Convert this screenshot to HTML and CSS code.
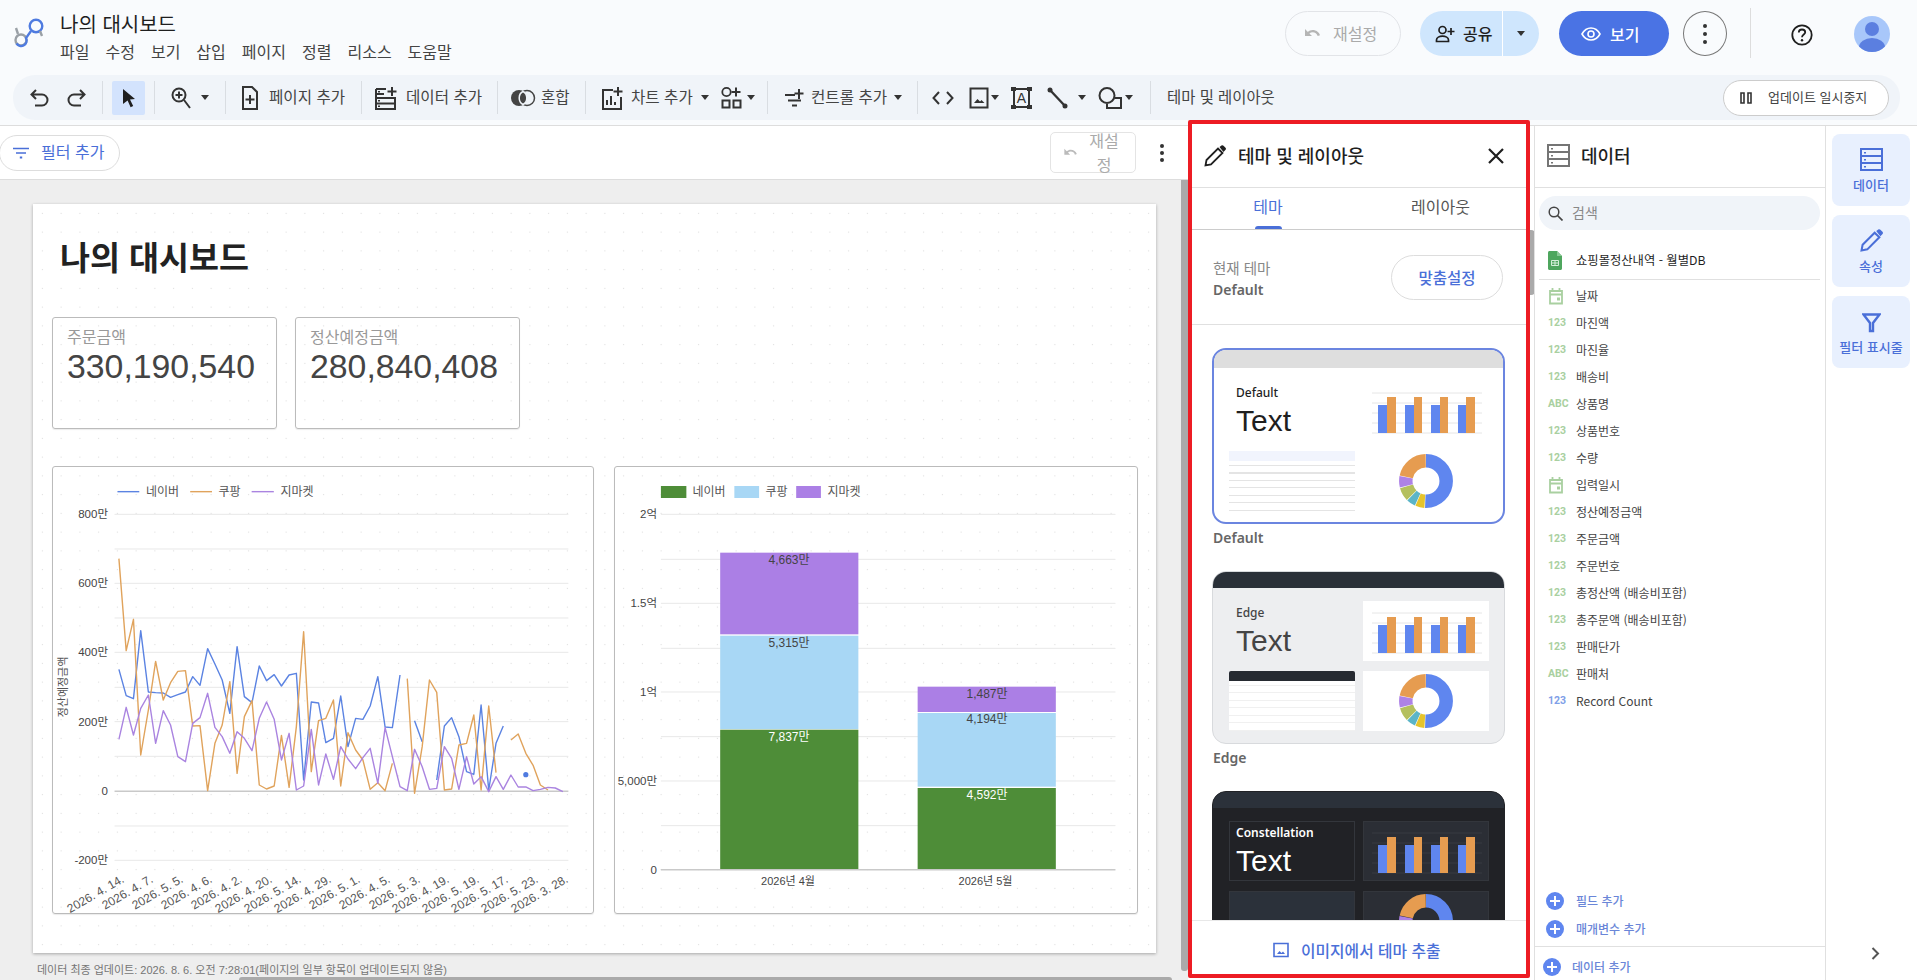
FILE: index.html

```html
<!DOCTYPE html>
<html lang="ko">
<head>
    <meta charset="UTF-8">
    <meta name="viewport" content="width=device-width, initial-scale=1.0">
    <title>나의 대시보드</title>
    <link rel="stylesheet" href="styles.css">
</head>
<body>
    <!-- mini chart shapes shared by the theme cards -->
    <svg class="defs" aria-hidden="true">
        <symbol id="mini-bars" viewBox="0 0 126 60">
            <path class="mini-grid" d="M9 12H119M9 22H119M9 32H119M9 42H119M9 52H119"/>
            <path fill="#5f86ef" d="M15 24h9v28h-9zM42 24h9v28h-9zM68 24h9v28h-9zM95 24h8v28h-8z"/>
            <path fill="#e69c50" d="M24 16h9v36h-9zM51 16h8v36h-8zM77 16h8v36h-8zM103 16h9v36h-9z"/>
        </symbol>
        <symbol id="mini-donut" viewBox="0 0 126 60">
            <g fill="none" stroke-width="13.5" transform="rotate(-90 63 30)">
                <circle cx="63" cy="30" r="20.2" pathLength="100" stroke="#5f86ef" stroke-dasharray="50.6 49.4"/>
                <circle cx="63" cy="30" r="20.2" pathLength="100" stroke="#e6c42c" stroke-dasharray="5.4 94.6" stroke-dashoffset="-51"/>
                <circle cx="63" cy="30" r="20.2" pathLength="100" stroke="#5bb5c8" stroke-dasharray="5.4 94.6" stroke-dashoffset="-56.8"/>
                <circle cx="63" cy="30" r="20.2" pathLength="100" stroke="#b4c05e" stroke-dasharray="8 92" stroke-dashoffset="-62.6"/>
                <circle cx="63" cy="30" r="20.2" pathLength="100" stroke="#ad82e6" stroke-dasharray="7 93" stroke-dashoffset="-71"/>
                <circle cx="63" cy="30" r="20.2" pathLength="100" stroke="#e69c50" stroke-dasharray="21.4 78.6" stroke-dashoffset="-78.4"/>
            </g>
        </symbol>
        <symbol id="ic-plus-circle" viewBox="0 0 18 18">
            <circle cx="9" cy="9" r="9" fill="#5f86ef"/>
            <path d="M9 4v10M4 9h10" stroke="#fff" stroke-width="2"/>
        </symbol>
        <symbol id="ic-calendar" viewBox="0 0 16 18">
            <path fill="none" stroke="#a9d0a0" stroke-width="1.8" d="M2 4h12v12.500H2zM2 7.500h12M4.500 1v3M11.500 1v3"/>
            <path fill="#a9d0a0" d="M9 10.500h3v3H9z"/>
        </symbol>
    </svg>

    <header class="topbar">
        <div class="title-row">
            <svg class="logo" width="36" height="36" viewBox="0 0 36 36">
                <circle cx="10" cy="26" r="5.500" fill="none" stroke="#9aa0a6" stroke-width="2.400"/>
                <path d="M5.500 29.500A5.500 5.500 0 0 0 15 24L20 17" fill="none" stroke="#4f7be0" stroke-width="2.400"/>
                <circle cx="25" cy="12" r="6.300" fill="none" stroke="#4f7be0" stroke-width="2.400"/>
                <path d="M29 17l2 5M7 20l-2-6" stroke="#9aa0a6" stroke-width="2.400"/>
            </svg>
            <div class="doc-info">
                <div class="doc-title">나의 대시보드</div>
                <nav class="menu">
                    <span>파일</span><span>수정</span><span>보기</span><span>삽입</span><span>페이지</span><span>정렬</span><span>리소스</span><span>도움말</span>
                </nav>
            </div>
            <div class="top-actions">
                <div class="pill pill-reset">
                    <svg width="16" height="12" viewBox="0 0 16 12"><path fill="#b5b5b5" d="M0 1v7h7L4.400 5.400C5.300 4.700 6.400 4.300 7.700 4.300c2.300 0 4.300 1.500 5 3.700l2.300-.8C14 4.200 11.100 2 7.700 2 5.800 2 4.200 2.700 2.900 3.900z"/></svg>
                    <span>재설정</span>
                </div>
                <div class="pill pill-share">
                    <div class="share-main">
                        <svg width="20" height="18" viewBox="0 0 20 18"><circle cx="7.500" cy="5" r="3.500" fill="none" stroke="#1f1f1f" stroke-width="1.700"/><path d="M1.500 16.500v-1.500c0-2.500 3-3.800 6-3.800s6 1.300 6 3.800v1.500zM16 3v7M12.500 6.500h7" fill="none" stroke="#1f1f1f" stroke-width="1.700"/></svg>
                        <span>공유</span>
                    </div>
                    <div class="share-caret"><i class="caret"></i></div>
                </div>
                <div class="pill pill-view">
                    <svg width="20" height="14" viewBox="0 0 20 14"><path d="M1 7c2-3.700 5.200-6 9-6s7 2.300 9 6c-2 3.700-5.200 6-9 6S3 10.700 1 7z" fill="none" stroke="#fff" stroke-width="1.600"/><circle cx="10" cy="7" r="3" fill="none" stroke="#fff" stroke-width="1.600"/></svg>
                    <span>보기</span>
                </div>
                <div class="round-kebab"><i></i><i></i><i></i></div>
                <div class="top-sep"></div>
                <svg class="help" width="22" height="22" viewBox="0 0 22 22"><circle cx="11" cy="11" r="9.700" fill="none" stroke="#1f1f1f" stroke-width="1.800"/><path d="M7.800 8.500c0-1.900 1.400-3 3.200-3s3.200 1.100 3.200 2.800c0 2.300-3.200 2.300-3.200 5" fill="none" stroke="#1f1f1f" stroke-width="1.800"/><circle cx="11" cy="16.200" r="1.200" fill="#1f1f1f"/></svg>
                <svg class="avatar" width="36" height="36" viewBox="0 0 36 36"><defs><clipPath id="av"><circle cx="18" cy="18" r="18"/></clipPath></defs><circle cx="18" cy="18" r="18" fill="#a8c7fa"/><g clip-path="url(#av)" fill="#5b7fe0"><circle cx="18" cy="13" r="7"/><ellipse cx="18" cy="31" rx="13" ry="9"/></g></svg>
            </div>
        </div>

        <div class="toolbar">
            <div class="tb-group tb-history">
                <svg width="21" height="20" viewBox="0 0 21 20"><path class="ic" d="M7 2L2.500 6.500 7 11M2.500 6.500H13a5.500 5.500 0 0 1 0 11H6"/></svg>
                <svg width="21" height="20" viewBox="0 0 21 20"><path class="ic" d="M14 2l4.500 4.500L14 11M18.500 6.500H8a5.500 5.500 0 0 0 0 11h7"/></svg>
            </div>
            <div class="tb-group tb-cursor">
                <div class="cursor-btn"><svg width="14" height="20" viewBox="0 0 14 20"><path fill="#1f1f1f" d="M1 1l12 10-5 .500 3.200 6.500-2.600 1.300-3-6.700L1 16z"/></svg></div>
            </div>
            <div class="tb-group tb-zoom">
                <svg width="20" height="22" viewBox="0 0 20 22"><circle cx="8" cy="8" r="6.500" fill="none" stroke="#333" stroke-width="2"/><path class="ic" d="M8 4.500v7M4.500 8h7M13 13l6 8"/></svg>
                <i class="caret"></i>
            </div>
            <div class="tb-group tb-page">
                <svg width="16" height="24" viewBox="0 0 16 24"><path class="ic" d="M1 1h9l5 5v17H1zM8 9v9M3.500 13.500h9"/></svg>
                <span>페이지 추가</span>
            </div>
            <div class="tb-group tb-data">
                <svg width="23" height="24" viewBox="0 0 23 24"><path class="ic" d="M1 3h10M1 3v20h19V12H1M1 8h8M1 17.500h19M17 1v9M12.500 5.500h9"/><path fill="#333" d="M3 5h2v1.500H3zM3 14h2v1.500H3zM3 19.500h2V21H3z"/></svg>
                <span>데이터 추가</span>
            </div>
            <div class="tb-group tb-blend">
                <svg width="26" height="18" viewBox="0 0 26 18"><circle cx="17" cy="9" r="7.500" fill="none" stroke="#444" stroke-width="1.500"/><circle cx="9" cy="9" r="8" fill="#444"/><path fill="#444" stroke="#f0f4f9" stroke-width="1.500" d="M13 2.500c-2.600 1.300-3.800 3.800-3.800 6.500s1.200 5.200 3.800 6.500c2.600-1.300 3.800-3.800 3.800-6.500S15.600 3.800 13 2.500z"/></svg>
                <span>혼합</span>
            </div>
            <div class="tb-group tb-chart">
                <svg width="21" height="24" viewBox="0 0 21 24"><path class="ic" d="M11 4H1v19h18V11M5 19v-5M9 19v-9M13 19v-3M16 1v9M11.500 5.500h9"/></svg>
                <span>차트 추가</span>
                <i class="caret"></i>
                <svg class="tb-community" width="21" height="24" viewBox="0 0 21 24"><circle cx="5.500" cy="6" r="4.200" fill="none" stroke="#333" stroke-width="1.800"/><path class="ic" d="M15 1.500v9M10.500 6h9M1.500 14.500h7v7h-7zM12.500 14.500h7v7h-7z"/></svg>
                <i class="caret caret-near"></i>
            </div>
            <div class="tb-group tb-control">
                <svg width="20" height="22" viewBox="0 0 20 22"><path class="ic" d="M1 8h10M4 13.500h13M8 18.500h5M15 2v10M10.500 6.500h9"/></svg>
                <span>컨트롤 추가</span>
                <i class="caret"></i>
            </div>
            <div class="tb-group tb-insert">
                <svg width="22" height="16" viewBox="0 0 22 16"><path class="ic" d="M7 2L1.500 8 7 14M15 2l5.500 6L15 14"/></svg>
                <svg class="tb-next" width="20" height="22" viewBox="0 0 20 22"><path class="ic" d="M1.500 1.500h17v19h-17z"/><path fill="#333" d="M5 16l3.500-4 2.500 2.500 1.500-1.500 3 3z"/></svg>
                <i class="caret caret-near"></i>
                <svg class="tb-next-s" width="21" height="22" viewBox="0 0 21 22"><path class="ic" d="M3 2h15v18H3z"/><path fill="#333" d="M0 0h5v4H0zM16 0h5v4h-5zM0 18h5v4H0zM16 18h5v4h-5z"/><text x="10.500" y="16" text-anchor="middle" class="ic-letter">A</text></svg>
                <svg class="tb-next" width="21" height="22" viewBox="0 0 21 22"><path d="M3 3l15 16" stroke="#333" stroke-width="2.400"/><circle cx="3" cy="3" r="2.500" fill="#333"/><circle cx="18" cy="19" r="2.500" fill="#333"/></svg>
                <i class="caret caret-far"></i>
                <svg class="tb-next-s" width="25" height="22" viewBox="0 0 25 22"><circle cx="9" cy="8.500" r="7.500" fill="none" stroke="#333" stroke-width="2"/><path class="ic" d="M17 11h6v10H9v-4"/></svg>
                <i class="caret caret-near"></i>
            </div>
            <div class="tb-theme">테마 및 레이아웃</div>
            <div class="pause-btn">
                <svg width="12" height="12" viewBox="0 0 12 12"><path fill="none" stroke="#333" stroke-width="1.600" d="M1 1h3v10H1zM8 1h3v10H8z"/></svg>
                <span>업데이트 일시중지</span>
            </div>
        </div>
    </header>

    <main class="main">
        <section class="report-area">
            <div class="filter-bar">
                <div class="filter-pill">
                    <svg width="16" height="12" viewBox="0 0 16 12"><path stroke="#4a6fd8" stroke-width="1.700" d="M0 1.500h16M3 6h10"/><path stroke="#4a6fd8" stroke-width="2" d="M6.800 10.500h2.400"/></svg>
                    <span>필터 추가</span>
                </div>
                <div class="filter-reset">
                    <svg width="14" height="10" viewBox="0 0 16 12"><path fill="#bbb" d="M0 1v7h7L4.400 5.400C5.300 4.700 6.400 4.300 7.700 4.300c2.300 0 4.300 1.500 5 3.700l2.300-.8C14 4.200 11.100 2 7.700 2 5.800 2 4.200 2.700 2.900 3.900z"/></svg>
                    <span>재설정</span>
                </div>
                <div class="kebab"><i></i><i></i><i></i></div>
            </div>

            <div class="canvas">
                <div class="report-page">
                    <h1 class="report-title">나의 대시보드</h1>
                    <div class="kpi-row">
                        <div class="kpi">
                            <div class="kpi-label">주문금액</div>
                            <div class="kpi-value">330,190,540</div>
                        </div>
                        <div class="kpi">
                            <div class="kpi-label">정산예정금액</div>
                            <div class="kpi-value">280,840,408</div>
                        </div>
                    </div>
                    <div class="chart-row">
                        <div class="chart-card">
                            <svg class="chart" width="540" height="446" viewBox="0 0 540 446">
                                <!-- plot data is written in 2.75x / 3x units, the group scales it down -->
                                <g class="plot" transform="translate(-13 -7) scale(.36364 .33333)">
                                    <path class="grid" d="M205 163H1453M205 267H1453M205 370H1453M205 474H1453M205 577H1453M205 682H1453M205 785H1453M205 889H1453M205 1098H1453M205 1201H1453"/>
                                    <path class="axis" d="M205 994H1453"/>
                                    <path class="s-naver" d="M213 95H273"/>
                                    <path class="s-coupang" d="M413 95H473"/>
                                    <path class="s-gmarket" d="M582 95H643"/>
                                    <polyline class="s-naver" points="217,628 237,707 257,716 277,512 298,696 318,698 339,699 359,712 379,704 400,696 420,650 440,676 461,566 481,612 501,660 522,760 542,560 562,710 583,728 603,618 623,662 644,644 664,678 685,645 705,640 725,960 746,726 766,729 786,848 807,835 827,708 847,860 868,775 888,778 908,738 929,650 949,801 969,803 990,645"/>
                                    <polyline class="s-naver" points="1030,782 1051,845"/>
                                    <polyline class="s-naver" points="1091,960 1112,798 1132,773 1152,830 1173,935 1193,943 1213,735 1234,990 1254,850 1274,798"/>
                                    <polyline class="s-coupang" points="217,296 237,572 257,478 277,885 298,750 318,604 339,720 359,668 379,634 400,632 420,798 440,797 461,992 481,850 501,795 522,665 542,940 562,770 583,722 603,975 623,987 644,978 664,826 685,982 705,800 725,515 746,935 766,782 786,775 807,720 827,978 847,818 868,870 888,900 908,988 929,968 949,992 969,910"/>
                                    <polyline class="s-coupang" points="1010,656 1030,1000 1051,860 1071,660 1091,697 1112,990 1132,987 1152,855 1173,850 1193,765 1213,990 1234,738 1254,938"/>
                                    <polyline class="s-coupang" points="1295,840 1315,822 1336,880 1356,916 1376,975 1397,990"/>
                                    <polyline class="s-gmarket" points="217,838 237,742 257,825 277,745 298,705 318,850 339,752 359,795 379,890 400,905 420,790 440,773 461,700 481,802 501,830 522,880 542,815 562,835 583,872 603,775 623,726 644,778 664,900 685,820 705,990 725,978 746,808 766,975 786,882 807,958 827,860 847,897 868,926 888,893 908,865 929,970 949,803 969,890 990,980 1010,992 1030,868 1051,920 1071,988 1091,985 1112,860 1132,895 1152,988 1173,890 1193,972 1213,950 1234,995 1254,950 1274,988 1295,945 1315,981 1336,981 1356,992 1376,988 1397,982 1417,984 1438,995"/>
                                </g>
                                <circle cx="472.800" cy="307.700" r="2.600" fill="#4f7be0"/>
                                <text class="legend-text" x="93" y="25">네이버</text>
                                <text class="legend-text" x="165.500" y="25">쿠팡</text>
                                <text class="legend-text" x="227.500" y="25">지마켓</text>
                                <g class="tick">
                                    <text x="55" y="47">800만</text>
                                    <text x="55" y="116">600만</text>
                                    <text x="55" y="185">400만</text>
                                    <text x="55" y="255">200만</text>
                                    <text x="55" y="324">0</text>
                                    <text x="55" y="393">-200만</text>
                                </g>
                                <text class="axis-title" transform="translate(10 220) rotate(-90)">정산예정금액</text>
                                <g class="date-labels">
                                    <text transform="translate(70 411) rotate(-30)">2026. 4. 14.</text>
                                    <text transform="translate(99 411) rotate(-30)">2026. 4. 7.</text>
                                    <text transform="translate(129 411) rotate(-30)">2026. 5. 5.</text>
                                    <text transform="translate(158 411) rotate(-30)">2026. 4. 6.</text>
                                    <text transform="translate(188 411) rotate(-30)">2026. 4. 2.</text>
                                    <text transform="translate(218 411) rotate(-30)">2026. 4. 20.</text>
                                    <text transform="translate(247 411) rotate(-30)">2026. 5. 14.</text>
                                    <text transform="translate(277 411) rotate(-30)">2026. 4. 29.</text>
                                    <text transform="translate(306 411) rotate(-30)">2026. 5. 1.</text>
                                    <text transform="translate(336 411) rotate(-30)">2026. 4. 5.</text>
                                    <text transform="translate(366 411) rotate(-30)">2026. 5. 3.</text>
                                    <text transform="translate(395 411) rotate(-30)">2026. 4. 19.</text>
                                    <text transform="translate(425 411) rotate(-30)">2026. 5. 19.</text>
                                    <text transform="translate(454 411) rotate(-30)">2026. 5. 17.</text>
                                    <text transform="translate(484 411) rotate(-30)">2026. 5. 23.</text>
                                    <text transform="translate(514 411) rotate(-30)">2026. 3. 28.</text>
                                </g>
                            </svg>
                        </div>
                        <div class="chart-card chart-card-bars">
                            <svg class="chart" width="522" height="446" viewBox="0 0 522 446">
                                <g class="plot" transform="translate(-5 -7) scale(.36364 .33333)">
                                    <path class="grid" d="M140 163H1390M140 298H1390M140 430H1390M140 565H1390M140 696H1390M140 830H1390M140 963H1390M140 1097H1390"/>
                                    <rect class="bar-green" x="303" y="809" width="380" height="420"/>
                                    <rect class="bar-blue" x="303" y="527" width="380" height="280"/>
                                    <rect class="bar-purple" x="303" y="278" width="380" height="245"/>
                                    <rect class="bar-green" x="846" y="984" width="380" height="245"/>
                                    <rect class="bar-blue" x="846" y="759" width="380" height="221"/>
                                    <rect class="bar-purple" x="846" y="680" width="380" height="76"/>
                                    <path class="axis" d="M140 1229H1390"/>
                                    <rect class="bar-green" x="140" y="78" width="70" height="36"/>
                                    <rect class="bar-blue" x="342" y="78" width="68" height="36"/>
                                    <rect class="bar-purple" x="512" y="78" width="68" height="36"/>
                                </g>
                                <text class="legend-text" x="77.500" y="25">네이버</text>
                                <text class="legend-text" x="150.500" y="25">쿠팡</text>
                                <text class="legend-text" x="212.500" y="25">지마켓</text>
                                <g class="tick">
                                    <text x="42" y="47">2억</text>
                                    <text x="42" y="136">1.5억</text>
                                    <text x="42" y="225">1억</text>
                                    <text x="42" y="314">5,000만</text>
                                    <text x="42" y="403">0</text>
                                </g>
                                <g class="bar-label">
                                    <text x="174" y="93">4,663만</text>
                                    <text x="174" y="176">5,315만</text>
                                    <text class="on-green" x="174" y="270">7,837만</text>
                                    <text x="372" y="227">1,487만</text>
                                    <text x="372" y="252">4,194만</text>
                                    <text class="on-green" x="372" y="328">4,592만</text>
                                </g>
                                <g class="bar-month">
                                    <text x="173" y="414">2026년 4월</text>
                                    <text x="370.500" y="414">2026년 5월</text>
                                </g>
                            </svg>
                        </div>
                    </div>
                </div>
                <div class="updated">데이터 최종 업데이트: 2026. 8. 6. 오전 7:28:01(페이지의 일부 항목이 업데이트되지 않음)</div>
                <div class="scroll-v"></div>
                <div class="scroll-h"></div>
            </div>
        </section>

        <aside class="theme-panel">
            <div class="panel-head">
                <svg width="22" height="22" viewBox="0 0 22 22"><path fill="none" stroke="#1f1f1f" stroke-width="1.800" d="M1.500 20.500l1-5.500L14 3.500l4.500 4.500L7 19.500z"/><path fill="#1f1f1f" d="M15.500 2l2-1.500c.8-.5 1.500-.3 2 .2l2 2c.6.6.6 1.300.1 2L19.500 7z"/></svg>
                <span class="panel-title">테마 및 레이아웃</span>
                <svg class="panel-close" width="16" height="16" viewBox="0 0 16 16"><path stroke="#1f1f1f" stroke-width="2.200" d="M1 1l14 14M15 1L1 15"/></svg>
            </div>
            <div class="tabs">
                <div class="tab tab-active">테마</div>
                <div class="tab">레이아웃</div>
            </div>
            <div class="current-theme">
                <div>
                    <div class="current-label">현재 테마</div>
                    <div class="theme-name">Default</div>
                </div>
                <div class="custom-btn">맞춤설정</div>
            </div>
            <div class="theme-list">
                <div class="theme-card theme-default">
                    <div class="theme-strip"></div>
                    <div class="theme-cells">
                        <div class="cell cell-text"><div class="cell-name">Default</div><div class="cell-sample">Text</div></div>
                        <div class="cell"><svg width="126" height="60"><use href="#mini-bars"/></svg></div>
                        <div class="cell mini-table"></div>
                        <div class="cell"><svg width="126" height="60"><use href="#mini-donut"/></svg></div>
                    </div>
                </div>
                <div class="theme-name theme-caption">Default</div>
                <div class="theme-card theme-edge">
                    <div class="theme-strip"></div>
                    <div class="theme-cells">
                        <div class="cell cell-text"><div class="cell-name">Edge</div><div class="cell-sample">Text</div></div>
                        <div class="cell"><svg width="126" height="60"><use href="#mini-bars"/></svg></div>
                        <div class="cell mini-table"></div>
                        <div class="cell"><svg width="126" height="60"><use href="#mini-donut"/></svg></div>
                    </div>
                </div>
                <div class="theme-name theme-caption">Edge</div>
                <div class="theme-card theme-constellation">
                    <div class="theme-strip"></div>
                    <div class="theme-cells">
                        <div class="cell cell-text"><div class="cell-name">Constellation</div><div class="cell-sample">Text</div></div>
                        <div class="cell"><svg width="126" height="60"><use href="#mini-bars"/></svg></div>
                        <div class="cell mini-table"></div>
                        <div class="cell"><svg width="126" height="60"><use href="#mini-donut"/></svg></div>
                    </div>
                </div>
            </div>
            <div class="extract-bar">
                <svg width="16" height="16" viewBox="0 0 16 16"><path fill="none" stroke="#4a6fd8" stroke-width="1.600" d="M1 1.500h14v13H1z"/><path fill="#4a6fd8" d="M4 12l2.500-3 2 2 1.500-1.500 2 2.500z"/></svg>
                <span>이미지에서 테마 추출</span>
            </div>
        </aside>

        <aside class="data-panel">
            <div class="panel-head data-head">
                <svg width="23" height="23" viewBox="0 0 23 23"><path fill="#fff" stroke="#757575" stroke-width="2" d="M1 1h21v21H1zM1 8h21M1 15h21"/><path fill="#757575" d="M4 4h2v1.500H4zM4 11h2v1.500H4zM4 18h2v1.500H4z"/></svg>
                <span class="panel-title">데이터</span>
            </div>
            <div class="search">
                <svg width="15" height="15" viewBox="0 0 15 15"><circle cx="6" cy="6" r="4.800" fill="none" stroke="#444" stroke-width="1.500"/><path stroke="#444" stroke-width="1.700" d="M9.500 9.500l5 5"/></svg>
                <span>검색</span>
            </div>
            <div class="source-row">
                <svg width="14" height="19" viewBox="0 0 14 19"><path fill="#4ea65e" d="M0 1.500C0 .7.700 0 1.500 0H9l5 5v12.500c0 .8-.7 1.500-1.500 1.500h-11C.7 19 0 18.300 0 17.500z"/><path fill="#8bc896" d="M9 0l5 5H9z"/><path fill="none" stroke="#d5efd9" stroke-width="1" d="M3.500 9.500h7v5h-7zM3.500 12h7M7 9.500v5"/></svg>
                <span>쇼핑몰정산내역 - 월별DB</span>
            </div>
            <ul class="field-list">
                <li><span class="ftype"><svg width="16" height="18"><use href="#ic-calendar"/></svg></span>날짜</li>
                <li><span class="ftype">123</span>마진액</li>
                <li><span class="ftype">123</span>마진율</li>
                <li><span class="ftype">123</span>배송비</li>
                <li><span class="ftype">ABC</span>상품명</li>
                <li><span class="ftype">123</span>상품번호</li>
                <li><span class="ftype">123</span>수량</li>
                <li><span class="ftype"><svg width="16" height="18"><use href="#ic-calendar"/></svg></span>입력일시</li>
                <li><span class="ftype">123</span>정산예정금액</li>
                <li><span class="ftype">123</span>주문금액</li>
                <li><span class="ftype">123</span>주문번호</li>
                <li><span class="ftype">123</span>총정산액 (배송비포함)</li>
                <li><span class="ftype">123</span>총주문액 (배송비포함)</li>
                <li><span class="ftype">123</span>판매단가</li>
                <li><span class="ftype">ABC</span>판매처</li>
                <li><span class="ftype ftype-blue">123</span>Record Count</li>
            </ul>
            <div class="add-links">
                <div class="add-link"><svg width="18" height="18"><use href="#ic-plus-circle"/></svg><span>필드 추가</span></div>
                <div class="add-link"><svg width="18" height="18"><use href="#ic-plus-circle"/></svg><span>매개변수 추가</span></div>
            </div>
            <div class="add-link add-data"><svg width="18" height="18"><use href="#ic-plus-circle"/></svg><span>데이터 추가</span></div>
        </aside>

        <nav class="rail">
            <div class="rail-btn">
                <svg width="23" height="23" viewBox="0 0 23 23"><path fill="none" stroke="#4a6fd8" stroke-width="2" d="M1 1h21v21H1zM1 8h21M1 15h21"/><path fill="#4a6fd8" d="M4 4h2v1.500H4zM4 11h2v1.500H4zM4 18h2v1.500H4z"/></svg>
                <span>데이터</span>
            </div>
            <div class="rail-btn">
                <svg width="23" height="23" viewBox="0 0 22 22"><path fill="none" stroke="#4a6fd8" stroke-width="2" d="M1.500 20.500l1-5.500L14 3.500l4.500 4.500L7 19.500z"/><path fill="#4a6fd8" d="M15.500 2l2-1.500c.8-.5 1.500-.3 2 .2l2 2c.6.6.6 1.300.1 2L19.500 7z"/></svg>
                <span>속성</span>
            </div>
            <div class="rail-btn">
                <svg width="19" height="20" viewBox="0 0 19 20"><path fill="none" stroke="#4a6fd8" stroke-width="2.400" d="M1.500 1.500h16L11 10v8H8v-8z"/></svg>
                <span>필터 표시줄</span>
            </div>
            <svg class="rail-chevron" width="9" height="13" viewBox="0 0 9 13"><path fill="none" stroke="#555" stroke-width="2" d="M1.500 1l5.500 5.500L1.500 12"/></svg>
        </nav>
    </main>
</body>
</html>
```

FILE: styles.css

```css
* {
    box-sizing: border-box;
}
body {
    margin: 0;
    height: 100vh;
    overflow: hidden;
    display: flex;
    flex-direction: column;
    font-family: 'Noto Sans CJK KR', 'Liberation Sans', sans-serif;
    color: #1f1f1f;
    background: white;
}
.defs {
    position: absolute;
    width: 0;
    height: 0;
}
.ic {
    fill: none;
    stroke: #333;
    stroke-width: 2;
}
.ic-letter {
    font-family: 'Liberation Sans', sans-serif;
    font-size: 14px;
    fill: #333;
}
.caret {
    display: block;
    flex: none;
    width: 0;
    height: 0;
    border-left: 4px solid transparent;
    border-right: 4px solid transparent;
    border-top: 5px solid #333;
}

/* top bar */
.topbar {
    height: 126px;
    flex: none;
    background-color: #f9fbfd;
    border-bottom: 1px solid #ddd;
}
.title-row {
    height: 75px;
    display: flex;
    padding-left: 11px;
}
.logo {
    margin-top: 14px;
}
.doc-info {
    margin-left: 13px;
    padding-top: 10px;
}
.doc-title {
    font-size: 20px;
    line-height: 28px;
}
.menu {
    display: flex;
    gap: 16px;
    margin-top: -1px;
    font-size: 16px;
    line-height: 28px;
    color: #444;
}
.top-actions {
    margin-left: auto;
    padding: 11px 27px 0 0;
    display: flex;
    align-items: flex-start;
}
.pill {
    height: 45px;
    border-radius: 23px;
    display: flex;
    align-items: center;
    font-size: 16px;
}
.pill-reset span,
.share-main span {
    padding-bottom: 2px;
}
.pill-reset {
    width: 116px;
    padding-left: 19px;
    gap: 12px;
    border: 1px solid #e2e4e8;
    color: #aaa;
}
.pill-share {
    width: 119px;
    margin-left: 19px;
    background-color: #cfe6fd;
    font-weight: 500;
    overflow: hidden;
}
.share-main {
    width: 83px;
    height: 100%;
    padding-left: 15px;
    display: flex;
    align-items: center;
    gap: 8px;
    border-right: 1px solid white;
}
.share-caret {
    flex: 1;
    display: flex;
    justify-content: center;
}
.pill-view {
    width: 110px;
    margin-left: 20px;
    padding-left: 22px;
    gap: 9px;
    background-color: #4a73e4;
    color: white;
    font-weight: 500;
}
.round-kebab {
    width: 44px;
    height: 45px;
    margin-left: 14px;
    border: 1px solid #777;
    border-radius: 50%;
    display: flex;
    flex-direction: column;
    align-items: center;
    justify-content: center;
    gap: 4px;
}
.round-kebab i,
.kebab i {
    width: 4px;
    height: 4px;
    border-radius: 50%;
    background-color: #333;
}
.top-sep {
    width: 1px;
    height: 50px;
    margin: -3px 40px 0 23px;
    background-color: #ddd;
}
.help {
    margin-top: 13px;
}
.avatar {
    margin: 5px 0 0 41px;
}

/* toolbar */
.toolbar {
    height: 45px;
    margin: 0 17px 0 13px;
    padding-right: 11px;
    display: flex;
    align-items: center;
    background-color: #f0f4f9;
    border-radius: 22px;
    font-size: 15.600px;
    color: #444;
}
.tb-group {
    height: 33px;
    flex: none;
    display: flex;
    align-items: center;
    gap: 8px;
    padding-left: 16px;
    border-right: 1px solid #d9dde2;
    white-space: nowrap;
}
.tb-group span,
.tb-theme,
.pause-btn span {
    padding-bottom: 3px;
}
.tb-history {
    width: 90px;
    gap: 16px;
}
.tb-cursor {
    width: 52px;
    padding-left: 9px;
}
.cursor-btn {
    width: 33px;
    height: 34px;
    display: flex;
    align-items: center;
    justify-content: center;
    background-color: #d3e3fd;
    border-radius: 2px;
}
.tb-zoom {
    width: 71px;
    gap: 10px;
}
.tb-page {
    width: 136px;
    gap: 11px;
}
.tb-data {
    width: 136px;
    padding-left: 13px;
}
.tb-blend {
    width: 88px;
    padding-left: 12px;
    gap: 5px;
}
.tb-chart {
    width: 182px;
}
.tb-community {
    margin-left: 4px;
}
.tb-control {
    width: 150px;
    gap: 7px;
}
.tb-insert {
    width: 233px;
    padding-left: 14px;
    gap: 5px;
}
.tb-next {
    margin-left: 10px;
}
.tb-next-s {
    margin-left: 7px;
}
.caret-near {
    margin-left: -3px;
}
.caret-far {
    margin-left: 5px;
}
.tb-theme {
    margin-left: 16px;
    font-size: 15.400px;
    white-space: nowrap;
}
.pause-btn {
    width: 166px;
    height: 36px;
    margin-left: auto;
    padding-left: 16px;
    display: flex;
    align-items: center;
    gap: 16px;
    background-color: white;
    border: 1px solid #ccc;
    border-radius: 18px;
    font-size: 13px;
    white-space: nowrap;
}

/* main row */
.main {
    flex: 1;
    min-height: 0;
    display: flex;
}
.report-area {
    width: 1188px;
    flex: none;
    display: flex;
    flex-direction: column;
}
.filter-bar {
    height: 54px;
    flex: none;
    padding-right: 24px;
    display: flex;
    align-items: center;
    border-bottom: 1px solid #ddd;
}
.filter-pill {
    width: 121px;
    height: 36px;
    margin-left: -1px;
    padding-left: 13px;
    display: flex;
    align-items: center;
    gap: 12px;
    border: 1px solid #ddd;
    border-radius: 18px;
    font-size: 16px;
    color: #4a6fd8;
}
.filter-pill span {
    padding-bottom: 3px;
}
.filter-reset {
    width: 86px;
    height: 41px;
    margin-left: auto;
    padding-left: 13px;
    display: flex;
    align-items: center;
    gap: 11px;
    border: 1px solid #e4e4e4;
    border-radius: 5px;
    font-size: 16px;
    line-height: 24px;
    color: #aaa;
}
.filter-reset span {
    width: 30px;
    padding-bottom: 2px;
    text-align: center;
    word-break: break-all;
}
.kebab {
    margin-left: 24px;
    display: flex;
    flex-direction: column;
    gap: 3px;
}

/* report canvas */
.canvas {
    position: relative;
    flex: 1;
    min-height: 0;
    padding: 24px 0 0 33px;
    overflow: hidden;
    background-color: #eee;
    font-family: 'Liberation Sans', 'Noto Sans CJK KR', sans-serif;
}
.report-page {
    width: 1123px;
    height: 749px;
    padding: 0 19px;
    background-color: white;
    background-image: radial-gradient(circle, #dcdcdc .7px, transparent 1px);
    background-size: 18.750px 18.750px;
    box-shadow: 0 1px 3px rgba(0,0,0,0.3);
}
.report-title {
    height: 113px;
    margin: 0 0 0 8px;
    font-size: 32.600px;
    line-height: 109px;
    font-weight: bold;
    color: #222;
}
.kpi-row {
    display: flex;
    gap: 18px;
}
.kpi {
    width: 225px;
    height: 112px;
    padding: 9px 14px;
    border: 1px solid #bbb;
    border-radius: 3px;
    box-shadow: 0 1px 1px rgba(0,0,0,0.08);
}
.kpi-label {
    font-size: 16px;
    line-height: 22px;
    color: #999;
}
.kpi-value {
    margin-top: -2px;
    font-size: 33.800px;
    line-height: 38px;
    color: #444;
}
.chart-row {
    margin-top: 37px;
    display: flex;
    gap: 20px;
}
.chart-card {
    width: 542px;
    height: 448px;
    border: 1px solid #bbb;
    border-radius: 3px;
    box-shadow: 0 1px 1px rgba(0,0,0,0.08);
}
.chart-card-bars {
    width: 524px;
}
.chart {
    display: block;
    overflow: visible;
    font-size: 11.500px;
    fill: #444;
}
.chart text {
    dominant-baseline: central;
}
.plot * {
    vector-effect: non-scaling-stroke;
    fill: none;
}
.plot .grid {
    stroke: #e8e8e8;
    stroke-width: 1;
}
.plot .axis {
    stroke: #c9c9c9;
    stroke-width: 1.500;
}
.s-naver,
.s-coupang,
.s-gmarket {
    stroke-width: 1.400;
    stroke-linejoin: round;
}
.s-naver {
    stroke: #5b83e2;
}
.s-coupang {
    stroke: #e0a35c;
}
.s-gmarket {
    stroke: #aa84e0;
}
.plot .bar-green {
    fill: #4e8d38;
}
.plot .bar-blue {
    fill: #a8d7f5;
}
.plot .bar-purple {
    fill: #ab7fe5;
}
.legend-text {
    font-size: 12px;
    fill: #555;
}
.tick {
    text-anchor: end;
}
.axis-title {
    font-size: 11px;
    text-anchor: middle;
    fill: #555;
}
.date-labels {
    font-size: 12px;
    text-anchor: end;
    fill: #555;
}
.bar-label {
    font-size: 12px;
    text-anchor: middle;
    fill: #444;
}
.bar-label .on-green {
    fill: white;
}
.bar-month {
    font-size: 11px;
    text-anchor: middle;
}
.updated {
    margin: 10px 0 0 4px;
    font-size: 11px;
    line-height: 14px;
    color: #757575;
    white-space: nowrap;
}
.scroll-v {
    position: absolute;
    top: 0;
    right: 0;
    width: 7px;
    height: 791px;
    background-color: #aaa;
    border-radius: 0 0 3px 3px;
}
.scroll-h {
    position: absolute;
    left: 239px;
    bottom: 0;
    width: 933px;
    height: 3px;
    background-color: #aaa;
    border-radius: 3px 3px 0 0;
}

/* theme panel */
.theme-panel {
    position: relative;
    width: 342px;
    flex: none;
    margin: -6px 0 2px;
    display: flex;
    flex-direction: column;
    background-color: white;
    border: 4px solid #ed1c24;
    border-radius: 2px;
}
.theme-panel::after {
    content: "";
    position: absolute;
    top: 106px;
    right: -9px;
    width: 9px;
    height: 65px;
    background-color: #aaa;
    border-radius: 4px;
    z-index: -1;
}
.panel-head {
    height: 64px;
    flex: none;
    padding-left: 12px;
    display: flex;
    align-items: center;
    gap: 12px;
    border-bottom: 1px solid #e0e0e0;
}
.panel-title {
    padding-bottom: 2px;
    font-size: 18px;
    font-weight: 500;
}
.panel-close {
    margin-left: auto;
    margin-right: 22px;
}
.tabs {
    height: 42px;
    flex: none;
    display: flex;
    border-bottom: 1px solid #ccc;
}
.tab {
    flex: 1;
    padding: 3px 0 0 11px;
    text-align: center;
    font-size: 16px;
    line-height: 30px;
    color: #555;
}
.tab:first-child {
    flex: none;
    width: 152px;
    padding-left: 0;
}
.tab-active {
    position: relative;
    color: #4a6fd8;
}
.tab-active::after {
    content: "";
    position: absolute;
    left: 63px;
    bottom: 0;
    width: 27px;
    height: 3px;
    background-color: #4a6fd8;
    border-radius: 3px 3px 0 0;
}
.current-theme {
    height: 95px;
    flex: none;
    padding: 0 23px 0 21px;
    display: flex;
    align-items: center;
    justify-content: space-between;
    border-bottom: 1px solid #e0e0e0;
}
.current-theme > div:first-child {
    padding-top: 3px;
}
.current-label {
    font-size: 14.500px;
    line-height: 22px;
    color: #888;
}
.theme-name {
    font-family: 'Noto Sans', sans-serif;
    font-size: 14px;
    font-weight: 600;
    line-height: 22px;
    color: #666;
}
.custom-btn {
    width: 112px;
    height: 45px;
    border: 1px solid #ddd;
    border-radius: 23px;
    text-align: center;
    font-size: 15.500px;
    font-weight: 500;
    line-height: 42px;
    color: #4a6fd8;
}
.theme-list {
    flex: 1;
    min-height: 0;
    overflow: hidden;
    padding: 23px 20px 0;
}
.theme-caption {
    height: 24px;
    margin: 2px 0 21px 1px;
    line-height: 24px;
}
.theme-card {
    width: 293px;
    height: 173px;
    overflow: hidden;
    border: 1px solid transparent;
    border-radius: 14px;
}
.theme-strip {
    height: 16px;
}
.theme-cells {
    padding: 13px 0 0 16px;
    display: grid;
    grid-template-columns: 126px 126px;
    grid-template-rows: 60px 60px;
    gap: 10px 8px;
}
.cell {
    overflow: hidden;
}
.cell svg {
    display: block;
    color: #e6e6e6;
}
.cell-text {
    padding: 5px 0 0 7px;
}
.cell-name {
    font-family: 'Noto Sans', sans-serif;
    font-size: 12px;
    font-weight: 500;
    line-height: 14px;
}
.cell-sample {
    margin-top: 4px;
    font-family: 'Liberation Sans', sans-serif;
    font-size: 30px;
    line-height: 34px;
}
.mini-table {
    background:
        linear-gradient(#f1f4fd, #f1f4fd) top / 100% 10px no-repeat,
        repeating-linear-gradient(#fff 0 6.400px, #e4e4e4 6.400px 7.500px);
}
.mini-grid {
    stroke: currentColor;
    stroke-width: 1;
}
.theme-default {
    height: 176px;
    border: 2px solid #6b85e0;
}
.theme-default .theme-strip {
    height: 18px;
    background-color: #dedede;
}
.theme-default .theme-cells {
    padding-left: 15px;
}
.theme-edge {
    background-color: #edeef0;
    border-color: #d8dadd;
}
.theme-edge .theme-strip {
    background-color: #2a3038;
}
.theme-edge .cell:not(.cell-text) {
    background-color: white;
}
.theme-edge .cell-name,
.theme-edge .cell-sample {
    color: #444;
}
.theme-edge .mini-table {
    background:
        linear-gradient(#262a31, #262a31) top / 100% 10px no-repeat,
        repeating-linear-gradient(#fff 0 6.400px, #f0f0f0 6.400px 7.500px);
    border-radius: 2px 2px 0 0;
}
.theme-constellation {
    background-color: #212226;
    border-color: #212226;
}
.theme-constellation .theme-strip {
    background-color: #2b313a;
}
.theme-constellation .cell {
    background-color: #2b2e35;
    border: 1px solid #33363c;
}
.theme-constellation .cell svg {
    margin: -1px;
    color: #383b42;
}
.theme-constellation .cell-text {
    padding: 4px 0 0 6px;
    background-color: #212226;
    color: white;
}
.theme-constellation .cell-name {
    font-weight: 600;
}
.theme-constellation .mini-table {
    background: #2b313a;
}
.extract-bar {
    height: 54px;
    flex: none;
    padding: 5px 0 0 81px;
    display: flex;
    align-items: center;
    gap: 12px;
    position: relative;
    background-color: white;
    border-top: 1px solid #e8e8e8;
    font-size: 15.800px;
    font-weight: 500;
    color: #4a6fd8;
}

/* data panel */
.data-panel {
    width: 292px;
    flex: none;
    margin-left: 4px;
    display: flex;
    flex-direction: column;
    border-left: 1px solid #e0e0e0;
    border-right: 1px solid #e0e0e0;
}
.data-head {
    height: 62px;
    padding: 0 0 2px 12px;
    gap: 11px;
}
.search {
    height: 34px;
    margin: 8px 5px 0 4px;
    padding-left: 9px;
    flex: none;
    display: flex;
    align-items: center;
    gap: 9px;
    background-color: #f0f4f9;
    border-radius: 17px;
    font-size: 14px;
    color: #888;
}
.search span,
.source-row span {
    padding-bottom: 2px;
}
.source-row {
    height: 38px;
    margin: 12px 5px 0 4px;
    padding-left: 9px;
    flex: none;
    display: flex;
    align-items: center;
    gap: 14px;
    border-bottom: 1px solid #e0e0e0;
    font-size: 12.300px;
}
.field-list {
    margin: 3px 0 0;
    padding: 0 0 0 13px;
    list-style: none;
}
.field-list li {
    height: 27px;
    padding-bottom: 2px;
    display: flex;
    align-items: center;
    font-size: 12px;
    color: #444;
}
.ftype {
    width: 28px;
    flex: none;
    display: flex;
    align-items: center;
    font-family: 'Roboto', sans-serif;
    font-size: 10.500px;
    font-weight: 700;
    color: #a9d0a0;
}
.ftype-blue {
    color: #7f9fe8;
}
.add-links {
    margin-top: auto;
    padding-bottom: 3px;
    border-bottom: 1px solid #e0e0e0;
}
.add-link {
    height: 28px;
    padding-left: 11px;
    display: flex;
    align-items: center;
    gap: 12px;
    font-size: 12px;
    font-weight: 500;
    color: #6a86d8;
}
.add-link span {
    padding-bottom: 2px;
}
.add-data {
    height: 26px;
    margin: 7px 0 0;
    padding-left: 8px;
    gap: 11px;
}

/* right rail */
.rail {
    flex: 1;
    padding: 8px 7px 0 6px;
    display: flex;
    flex-direction: column;
    gap: 9px;
}
.rail-btn {
    height: 72px;
    display: flex;
    flex-direction: column;
    align-items: center;
    justify-content: flex-end;
    gap: 5px;
    padding-bottom: 12px;
    background-color: #e8f0fe;
    border-radius: 8px;
    font-size: 13px;
    font-weight: 500;
    line-height: 18px;
    color: #4a6fd8;
}
.rail-chevron {
    margin: auto 0 20px 39px;
}
```
